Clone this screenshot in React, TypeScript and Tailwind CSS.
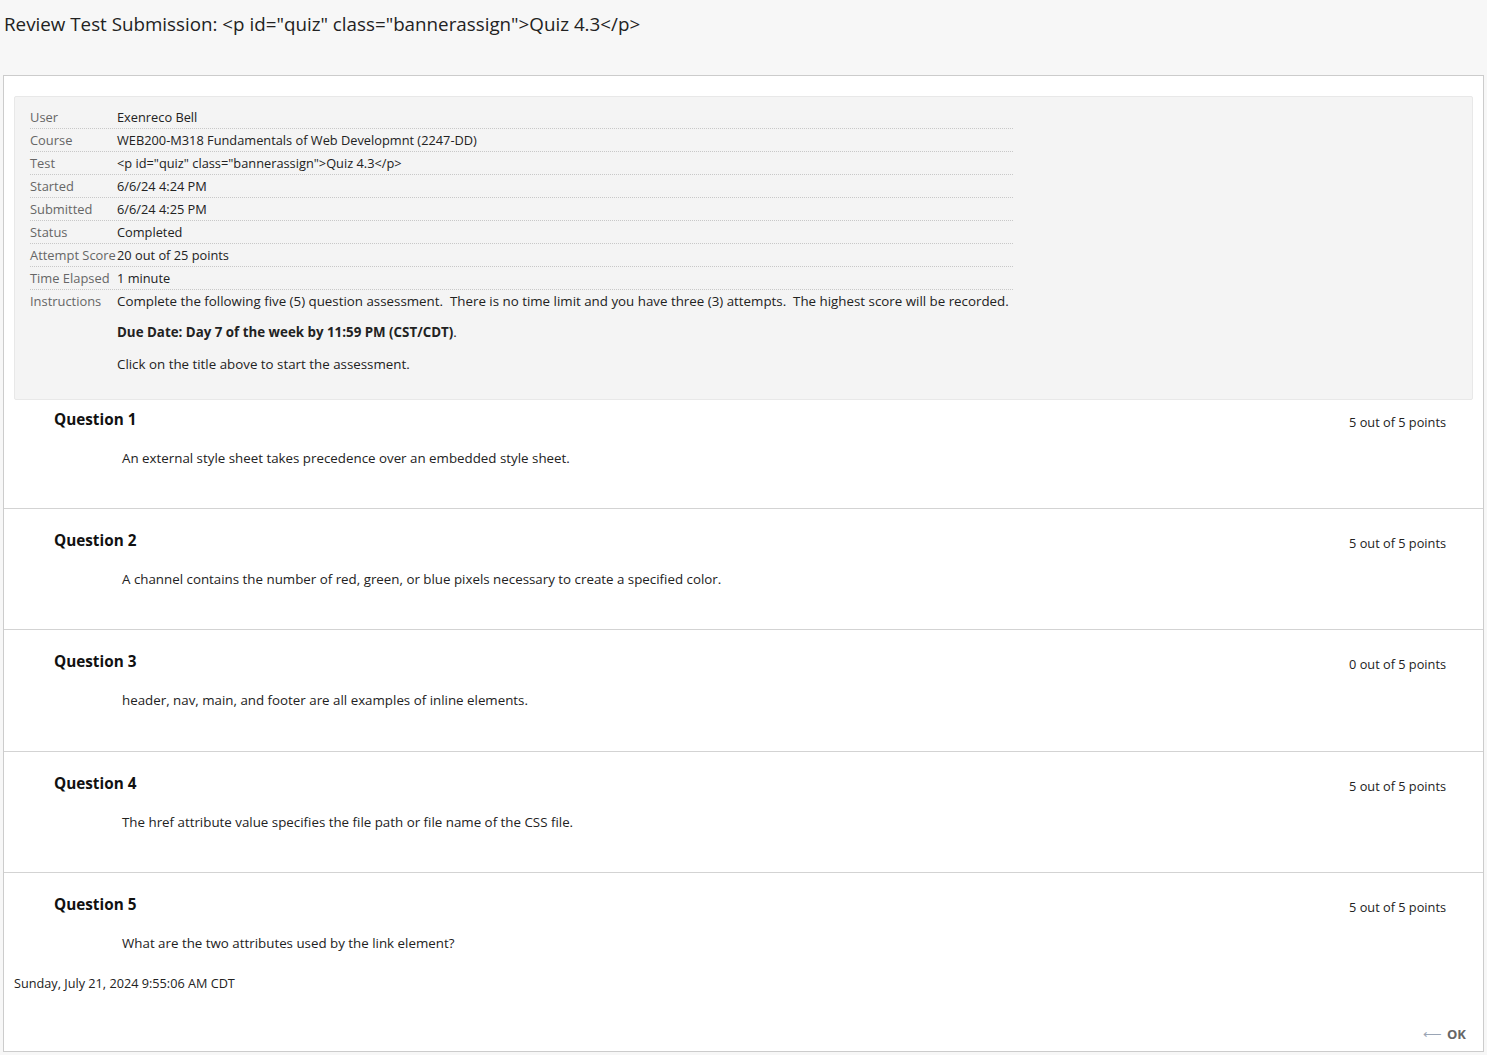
import React from "react"

type InfoRow = { label: string; value: string }

const infoRows: InfoRow[] = [
  { label: "User", value: "Exenreco Bell" },
  { label: "Course", value: "WEB200-M318 Fundamentals of Web Developmnt (2247-DD)" },
  { label: "Test", value: '<p id="quiz" class="bannerassign">Quiz 4.3</p>' },
  { label: "Started", value: "6/6/24 4:24 PM" },
  { label: "Submitted", value: "6/6/24 4:25 PM" },
  { label: "Status", value: "Completed" },
  { label: "Attempt Score", value: "20 out of 25 points" },
  { label: "Time Elapsed", value: "1 minute" },
]

const questions = [
  { n: 1, score: "5 out of 5 points", text: "An external style sheet takes precedence over an embedded style sheet." },
  { n: 2, score: "5 out of 5 points", text: "A channel contains the number of red, green, or blue pixels necessary to create a specified color." },
  { n: 3, score: "0 out of 5 points", text: "header, nav, main, and footer are all examples of inline elements." },
  { n: 4, score: "5 out of 5 points", text: "The href attribute value specifies the file path or file name of the CSS file." },
  { n: 5, score: "5 out of 5 points", text: "What are the two attributes used by the link element?" },
]

const InfoTable = () => (
  <div className="w-[983px] leading-[22px]">
    {infoRows.map((row) => (
      <div key={row.label} className="flex border-b border-dotted border-[#c8c8c8]">
        <div className="w-[87px] shrink-0 text-[12.9px] text-[#666]">{row.label}</div>
        <div className="text-[12.8px] text-[#222]">{row.value}</div>
      </div>
    ))}
    <div className="flex">
      <div className="w-[87px] shrink-0 text-[12.9px] text-[#666]">Instructions</div>
      <div className="flex flex-col text-[13.33px] text-[#222]">
        <p className="whitespace-pre">
          Complete the following five (5) question assessment.  There is no time limit and you have three (3) attempts.  The highest score will be recorded.
        </p>
        <p className="mt-[9px]">
          <span className="font-bold">Due Date: Day 7 of the week by 11:59 PM (CST/CDT)</span>.
        </p>
        <p className="mt-[10px]">Click on the title above to start the assessment.</p>
      </div>
    </div>
  </div>
)

const QuestionBlock = ({
  n,
  score,
  text,
  first,
  last,
}: {
  n: number
  score: string
  text: string
  first?: boolean
  last?: boolean
}) => (
  <div
    className={
      (first ? "pt-[9px] pb-[40px]" : "border-t border-[#d3d3d3] pt-[21px]") +
      (last ? " pb-0" : first ? "" : " pb-[40.4px]") +
      " pl-[50px] pr-[37px]"
    }
  >
    <div className="flex items-start justify-between">
      <h3 className="text-[15.3px] leading-[20px] font-bold text-[#111]">Question {n}</h3>
      <span className="mt-[4px] text-[12.75px] leading-[18px] text-[#222]">{score}</span>
    </div>
    <p className="mt-[17px] pl-[68px] text-[13.33px] leading-[20px] text-[#222]">{text}</p>
  </div>
)

export default function App() {
  return (
    <div
      className="min-h-[1055px] bg-[#f7f7f7] pb-[2px]"
      style={{ fontFamily: '"Open Sans", "Noto Sans", sans-serif' }}
    >
      <div className="flex h-[75px] items-start pl-[4px] pt-[10px]">
        <h1 className="text-[18.8px] leading-[28px] text-[#222]">
          Review Test Submission: &lt;p id="quiz" class="bannerassign"&gt;Quiz 4.3&lt;/p&gt;
        </h1>
      </div>

      <div className="ml-[3px] w-[1481px] border border-[#cccccc] bg-white">
        <div className="mx-[10px] mt-[20px] rounded-[2px] border border-[#e8e8e8] bg-[#f4f4f4] pt-[9px] pb-[24px] pl-[15px]">
          <InfoTable />
        </div>

        {questions.map((q, i) => (
          <QuestionBlock key={q.n} {...q} first={i === 0} last={i === questions.length - 1} />
        ))}

        <div className="mt-[20px] pl-[10px] text-[12.7px] leading-[20px] text-[#222]">
          Sunday, July 21, 2024 9:55:06 AM CDT
        </div>

        <div className="flex justify-end pt-[31px] pb-[7px] pr-[17px]">
          <button className="flex items-center gap-[5px] text-[13px] leading-[20px]">
            <span className="text-[#9aa5b5]">⟵</span>
            <span className="font-bold text-[#666]">OK</span>
          </button>
        </div>
      </div>
    </div>
  )
}
